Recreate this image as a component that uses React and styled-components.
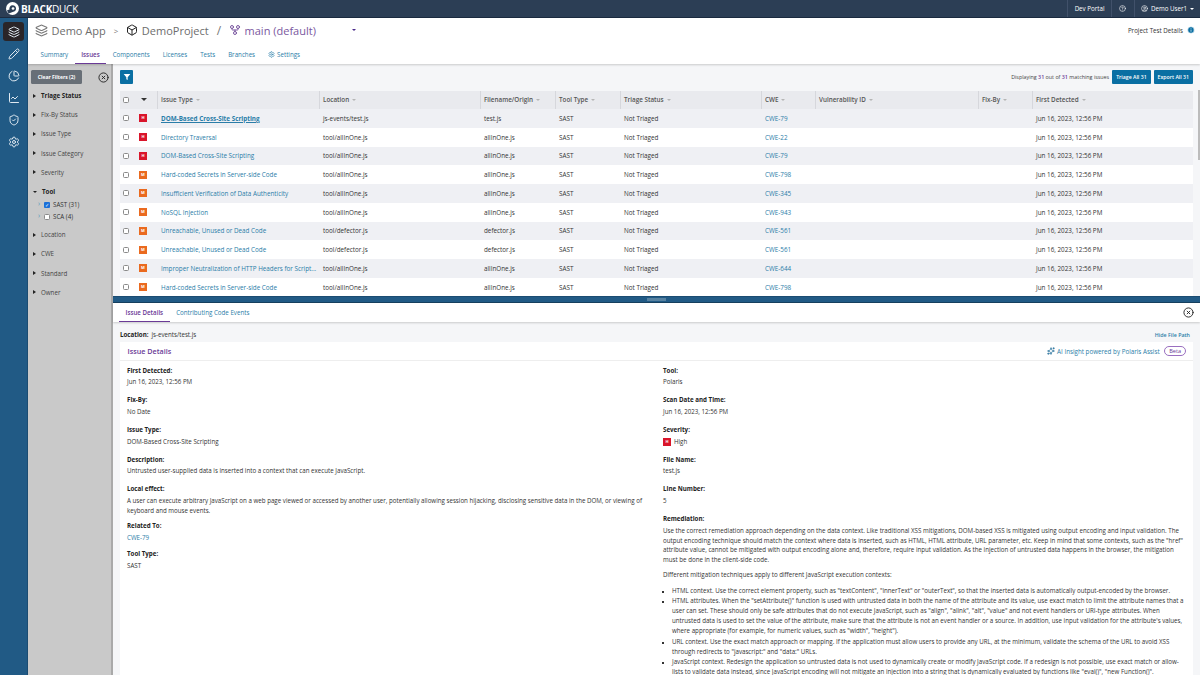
import React from 'react'
import styled, { createGlobalStyle } from 'styled-components'
import { Box, ChartLine, ChartPie, CircleHelp, CircleUser, CircleX, GitFork, Info, Layers, Pencil, Settings, ShieldCheck, Sparkles } from 'lucide-react'

const GlobalStyle = createGlobalStyle`
  html, body { margin: 0; padding: 0; height: 100%; overflow: hidden; }
  body { font-family: "Open Sans", "Liberation Sans", sans-serif; font-size: 6.2px; color: #333; background: #f5f6f8; }
  * { box-sizing: border-box; }
`

const Page = styled.div`
  width: 1200px;
  height: 675px;
  display: flex;
  flex-direction: column;
  overflow: hidden;
`
const TopBar = styled.header`
  height: 18px;
  flex: none;
  background: #2c3e55;
  border-bottom: 1px solid #1b2b40;
  display: flex;
  align-items: center;
  color: #fff;
`
const Logo = styled.div`
  display: flex;
  align-items: center;
  gap: 2px;
  padding-left: 6px;
  flex: 1;
`
const Brand = styled.div`
  font-size: 10px;
  letter-spacing: -0.25px;
  font-weight: 700;
  span { font-weight: 400; }
`
const TopItem = styled.div`
  height: 17px;
  display: flex;
  align-items: center;
  gap: 3px;
  padding: 0 ${p => p.$pad || 7}px;
  border-left: 1px solid #41516a;
  font-size: 6.2px;
`
const Caret = styled.i`
  width: 0;
  height: 0;
  display: inline-block;
  margin-left: ${p => p.$ml || 0}px;
  border-left: ${p => p.$s || 2.5}px solid transparent;
  border-right: ${p => p.$s || 2.5}px solid transparent;
  border-top: ${p => p.$s || 2.5}px solid ${p => p.$c || '#fff'};
`
const SideCaret = styled.i`
  width: 0;
  height: 0;
  display: inline-block;
  border-top: 2.5px solid transparent;
  border-bottom: 2.5px solid transparent;
  border-left: 3px solid #222;
`
const Body = styled.div`
  flex: 1;
  min-height: 0;
  display: flex;
`
const Rail = styled.nav`
  width: 28px;
  flex: none;
  background: #215a85;
  border-right: 1px solid #1b4c72;
  display: flex;
  flex-direction: column;
  align-items: center;
  padding-top: 4px;
  gap: 3px;
`
const RailBtn = styled.div`
  width: 21px;
  height: 19px;
  border-radius: 3px;
  display: flex;
  align-items: center;
  justify-content: center;
  color: #dfe9f1;
  background: ${p => (p.$active ? '#2a2528' : 'transparent')};
`
const Content = styled.div`
  flex: 1;
  min-width: 0;
  display: flex;
  flex-direction: column;
`
const Head = styled.div`
  height: 46px;
  flex: none;
  background: #fff;
  box-shadow: 0 1px 2px rgba(0,0,0,0.18);
  position: relative;
  z-index: 2;
  display: flex;
  flex-direction: column;
`
const Crumbs = styled.div`
  height: 26px;
  display: flex;
  align-items: center;
  padding: 0 5px 2px 7px;
  font-size: 11px;
  color: #6d6d6d;
`
const Crumb = styled.div`
  display: flex;
  align-items: center;
  gap: 3.5px;
  color: ${p => p.$c || '#6d6d6d'};
`
const Sep = styled.span`
  margin: ${p => p.$m || '0 8px'};
  font-size: ${p => p.$s || 12}px;
  color: #777;
  display: flex;
`
const ProjectDetails = styled.div`
  margin-left: auto;
  display: flex;
  align-items: center;
  gap: 4px;
  font-size: 6.2px;
  color: #333;
`
const Tabs = styled.div`
  display: flex;
  padding-left: ${p => p.$pad ?? 6}px;
  height: ${p => p.$h || 20}px;
  align-items: stretch;
`
const Tab = styled.div`
  display: flex;
  align-items: center;
  gap: 2px;
  padding: 1px 6.5px 0;
  font-size: 6.2px;
  color: ${p => (p.$active ? '#6a3a96' : '#2a7da8')};
  font-weight: ${p => (p.$active ? 600 : 400)};
  border-bottom: 1.5px solid ${p => (p.$active ? '#6a3a96' : 'transparent')};
`
const Work = styled.div`
  flex: 1;
  min-height: 0;
  display: flex;
`
const Filters = styled.aside`
  width: 85px;
  flex: none;
  background: #c9c9c9;
  border-right: 2px solid #a9a9a9;
  padding: 6px 0 0 3px;
`
const FilterTop = styled.div`
  display: flex;
  align-items: center;
  justify-content: space-between;
  padding-right: 2px;
  margin-bottom: 2px;
`
const ClearBtn = styled.div`
  width: 51px;
  height: 14px;
  background: #686f77;
  color: #fff;
  border-radius: 1.5px;
  font-size: 5px;
  font-weight: 700;
  display: flex;
  align-items: center;
  justify-content: center;
`
const FilterRow = styled.div`
  height: 19.2px;
  display: flex;
  align-items: center;
  gap: 5px;
  padding-left: 2px;
  font-size: 6.2px;
  font-weight: ${p => (p.$bold ? 700 : 400)};
  color: ${p => (p.$bold ? '#222' : '#444')};
`
const FilterSubs = styled.div`
  margin: -2.5px 0 2.5px;
`
const FilterSub = styled.div`
  height: 12px;
  display: flex;
  align-items: center;
  gap: 2px;
  padding-left: 7px;
  font-size: 6.2px;
  color: #333;
  em { color: #4a94b8; font-style: normal; font-size: 7px; width: 4px; margin-top: -3px; }
`
const Main = styled.main`
  flex: 1;
  min-width: 0;
  display: flex;
  flex-direction: column;
`
const Upper = styled.section`
  height: 232px;
  flex: none;
  overflow: hidden;
  padding: 0 7px 0 7px;
  position: relative;
`
const Toolbar = styled.div`
  height: 26.5px;
  display: flex;
  align-items: center;
  gap: 3px;
  font-size: 5.35px;
  color: #444;
  b { color: #6a3a96; font-weight: 600; }
`
const FilterBtn = styled.div`
  width: 13px;
  height: 14px;
  background: #0a6fa3;
  border-radius: 1px;
  display: flex;
  align-items: center;
  justify-content: center;
  margin-right: auto;
`
const PrimaryBtn = styled.div`
  height: 14px;
  background: #0a6fa3;
  color: #fff;
  font-weight: 600;
  font-size: 5.2px;
  padding: 0 4px;
  border-radius: 1px;
  display: flex;
  align-items: center;
`
const Grid = styled.div`
  display: grid;
  grid-template-columns: 19px 18px 162px 161px 75px 65px 141px 54px 163px 54px 161px;
  height: ${p => p.$h}px;
  align-items: center;
  background: ${p => p.$bg};
`
const Th = styled.div`
  height: 100%;
  display: flex;
  align-items: center;
  gap: 3px;
  padding-left: 3px;
  font-size: 6.3px;
  font-weight: 600;
  color: #555;
  border-left: 1.5px solid #d6d7dc;
`
const Td = styled.div`
  padding-left: 4px;
  font-size: 6.3px;
  color: ${p => (p.$link ? '#2a7da8' : '#333')};
  font-weight: ${p => (p.$strong ? 700 : 400)};
  text-decoration: ${p => (p.$strong ? 'underline' : 'none')};
  white-space: nowrap;
  overflow: hidden;
`
const Check = styled.div`
  width: 6px;
  height: 6px;
  margin-left: ${p => p.$ml ?? 3}px;
  margin-right: ${p => p.$mr ?? 0}px;
  border: 1px solid #8a8a8a;
  border-radius: 1.5px;
  background: #fff;
`
const CheckOn = styled.div`
  width: 6px;
  height: 6px;
  background: #1a6fd8;
  border-radius: 1px;
  margin-right: 1px;
  color: #fff;
  font-size: 5px;
  line-height: 6px;
  text-align: center;
`
const Sev = styled.div`
  width: 8px;
  height: 8px;
  background: ${p => (p.$level === 'H' ? '#d9152b' : '#ea6a1f')};
  color: #fff;
  font-size: 4px;
  font-weight: 700;
  line-height: 8px;
  text-align: center;
`
const ScrollThumb = styled.div`
  position: absolute;
  right: 0;
  top: 26px;
  width: 2.5px;
  height: 70px;
  background: #bcbcbc;
`
const Splitter = styled.div`
  height: 7px;
  flex: none;
  background: #215a85;
  border-top: 1px solid #1b4c72;
  border-bottom: 1px solid #17405f;
  display: flex;
  align-items: center;
  justify-content: center;
`
const Grip = styled.div`
  width: 19px;
  height: 3px;
  background: #6f93ad;
  opacity: 0.7;
`
const DetailTabs = styled.div`
  height: 19px;
  flex: none;
  background: #fff;
  box-shadow: 0 1px 2px rgba(0,0,0,0.18);
  display: flex;
  align-items: center;
  justify-content: space-between;
  padding: 0 6px;
  position: relative;
`
const Location = styled.div`
  height: 20px;
  flex: none;
  display: flex;
  align-items: center;
  justify-content: space-between;
  padding: 5px 10px 0 7px;
  font-size: 6.2px;
  b { font-weight: 700; color: #222; margin-right: 3px; }
`
const HideLink = styled.span`
  font-size: 5.3px;
  font-weight: 600;
  color: #2a7da8;
`
const Card = styled.div`
  flex: 1;
  margin: 0 7px;
  background: #fff;
  min-height: 0;
  overflow: hidden;
`
const CardHead = styled.div`
  height: 19px;
  display: flex;
  align-items: center;
  justify-content: space-between;
  padding: 0 7px 0 7.5px;
  border-bottom: 1px solid #eee;
`
const CardTitle = styled.div`
  font-size: 7.2px;
  font-weight: 600;
  color: #6a3a96;
`
const Insight = styled.div`
  display: flex;
  align-items: center;
  gap: 2.5px;
  font-size: 6.25px;
  color: #2a7da8;
`
const Beta = styled.span`
  margin-left: 2px;
  border: 1px solid #9a6fc0;
  border-radius: 6px;
  padding: 0 4px;
  line-height: 8px;
  font-size: 5.6px;
  color: #6a3a96;
`
const Columns = styled.div`
  display: grid;
  grid-template-columns: 536px 1fr;
  padding: 4.5px 7px 0 7px;
`
const Field = styled.div`
  margin-bottom: ${p => p.$mb ?? 8}px;
`
const Label = styled.div`
  font-weight: 700;
  font-size: 6.2px;
  color: #222;
  line-height: 9.7px;
  margin-bottom: 2px;
`
const Value = styled.div`
  font-size: 6.2px;
  color: #333;
  line-height: ${p => p.$lh || 10}px;
  margin-bottom: ${p => p.$mb || 0}px;
`
const ValueLink = styled(Value)`
  color: #2a7da8;
  margin: 2.5px 0 -2px;
`
const SevLine = styled.div`
  display: flex;
  align-items: center;
  gap: 3px;
  height: 10px;
  font-size: 6.2px;
`
const Bullets = styled.ul`
  margin: 0;
  padding-left: 9px;
  font-size: 6.2px;
  line-height: 10px;
  list-style: square;
  li { margin-bottom: 0.5px; }
  li::marker { font-size: 5px; }
`

const columns = ['Issue Type', 'Location', 'Filename/Origin', 'Tool Type', 'Triage Status', 'CWE', 'Vulnerability ID', 'Fix-By', 'First Detected']
const rows = [
  ['H', 'DOM-Based Cross-Site Scripting', 'js-events/test.js', 'test.js', 'CWE-79'],
  ['H', 'Directory Traversal', 'tool/allInOne.js', 'allInOne.js', 'CWE-22'],
  ['H', 'DOM-Based Cross-Site Scripting', 'tool/allInOne.js', 'allInOne.js', 'CWE-79'],
  ['M', 'Hard-coded Secrets in Server-side Code', 'tool/allInOne.js', 'allInOne.js', 'CWE-798'],
  ['M', 'Insufficient Verification of Data Authenticity', 'tool/allInOne.js', 'allInOne.js', 'CWE-345'],
  ['M', 'NoSQL Injection', 'tool/allInOne.js', 'allInOne.js', 'CWE-943'],
  ['M', 'Unreachable, Unused or Dead Code', 'tool/defector.js', 'defector.js', 'CWE-561'],
  ['M', 'Unreachable, Unused or Dead Code', 'tool/defector.js', 'defector.js', 'CWE-561'],
  ['M', 'Improper Neutralization of HTTP Headers for Script...', 'tool/allInOne.js', 'allInOne.js', 'CWE-644'],
  ['M', 'Hard-coded Secrets in Server-side Code', 'tool/allInOne.js', 'allInOne.js', 'CWE-798'],
]
const filterTop = [['Triage Status', true], ['Fix-By Status'], ['Issue Type'], ['Issue Category'], ['Severity']]
const filterBottom = ['Location', 'CWE', 'Standard', 'Owner']

const BlackDuckMark = () => (
  <svg width="13" height="13" viewBox="0 0 24 24">
    <circle cx="12" cy="12" r="12" fill="#fff" />
    <path d="M12 6a6.500 6.500 0 0 1 6.500 6.500c0 2-1 3.500-2.500 4.500L5 21a12 12 0 0 1-3-6l4.500-1A6 6 0 0 1 12 6z" fill="#2c3e55" />
    <circle cx="13" cy="12" r="2.500" fill="#fff" />
  </svg>
)

export default function App() {
  return (
    <Page>
      <GlobalStyle />
      <TopBar>
        <Logo><BlackDuckMark /><Brand>BLACK<span>DUCK</span></Brand></Logo>
        <TopItem $pad={6.5}>Dev Portal</TopItem>
        <TopItem $pad={7.5}><CircleHelp size={7} /></TopItem>
        <TopItem $pad={6}><CircleUser size={7} />Demo User1<Caret /></TopItem>
      </TopBar>
      <Body>
        <Rail>
          <RailBtn $active><Layers size={12} /></RailBtn>
          <RailBtn><Pencil size={12} /></RailBtn>
          <RailBtn><ChartPie size={12} /></RailBtn>
          <RailBtn><ChartLine size={12} /></RailBtn>
          <RailBtn><ShieldCheck size={12} /></RailBtn>
          <RailBtn><Settings size={12} /></RailBtn>
        </Rail>
        <Content>
          <Head>
            <Crumbs>
              <Crumb><Layers size={13} color="#777" />Demo App</Crumb>
              <Sep $s={8}>&gt;</Sep>
              <Crumb><Box size={12} color="#222" />DemoProject</Crumb>
              <Sep>/</Sep>
              <Crumb $c="#7a57a0"><GitFork size={12} />main (default)</Crumb>
              <Sep $m="0 0 0 36px"><Caret $c="#4a2a8a" /></Sep>
              <ProjectDetails>Project Test Details <Info size={8} fill="#0a6fa3" color="#fff" /></ProjectDetails>
            </Crumbs>
            <Tabs>
              {['Summary', 'Issues', 'Components', 'Licenses', 'Tests', 'Branches'].map(t => (
                <Tab key={t} $active={t === 'Issues'}>{t}</Tab>
              ))}
              <Tab><Settings size={7} />Settings</Tab>
            </Tabs>
          </Head>
          <Work>
            <Filters>
              <FilterTop>
                <ClearBtn>Clear Filters (2)</ClearBtn>
                <CircleX size={11} color="#222" />
              </FilterTop>
              {filterTop.map(([name, bold]) => (
                <FilterRow key={name} $bold={bold}><SideCaret />{name}</FilterRow>
              ))}
              <FilterRow $bold><Caret $c="#222" />Tool</FilterRow>
              <FilterSubs>
                <FilterSub><em>›</em><CheckOn>✓</CheckOn>SAST (31)</FilterSub>
                <FilterSub><em>›</em><Check $ml={0} $mr={1} />SCA (4)</FilterSub>
              </FilterSubs>
              {filterBottom.map(name => (
                <FilterRow key={name}><SideCaret />{name}</FilterRow>
              ))}
            </Filters>
            <Main>
              <Upper>
                <Toolbar>
                  <FilterBtn>
                    <svg width="8" height="8" viewBox="0 0 24 24"><path d="M2 3h20l-8 10v8l-4-2v-6z" fill="#fff" /></svg>
                  </FilterBtn>
                  <span>Displaying <b>31</b> out of <b>31</b> matching issues</span>
                  <PrimaryBtn>Triage All 31</PrimaryBtn>
                  <PrimaryBtn>Export All 31</PrimaryBtn>
                </Toolbar>
                <Grid $h={18.5} $bg="#e9eaee">
                  <Check />
                  <Caret $s={3} $c="#333" $ml={2} />
                  {columns.map(c => (
                    <Th key={c}>{c}<Caret $c="#b5b5b5" /></Th>
                  ))}
                </Grid>
                {rows.map((r, i) => (
                  <Grid key={i} $h={18.75} $bg={i % 2 ? '#fff' : '#eff0f4'}>
                    <Check />
                    <Sev $level={r[0]}>{r[0]}</Sev>
                    <Td $link $strong={i === 0}>{r[1]}</Td>
                    <Td>{r[2]}</Td>
                    <Td>{r[3]}</Td>
                    <Td>SAST</Td>
                    <Td>Not Triaged</Td>
                    <Td $link>{r[4]}</Td>
                    <Td />
                    <Td />
                    <Td>Jun 16, 2023, 12:56 PM</Td>
                  </Grid>
                ))}
                <ScrollThumb />
              </Upper>
              <Splitter><Grip /></Splitter>
              <DetailTabs>
                <Tabs $h={19} $pad={0}>
                  <Tab $active>Issue Details</Tab>
                  <Tab>Contributing Code Events</Tab>
                </Tabs>
                <CircleX size={11} color="#222" />
              </DetailTabs>
              <Location>
                <span><b>Location:</b>js-events/test.js</span>
                <HideLink>Hide File Path</HideLink>
              </Location>
              <Card>
                <CardHead>
                  <CardTitle>Issue Details</CardTitle>
                  <Insight><Sparkles size={8} color="#0a5f8f" />AI Insight powered by Polaris Assist<Beta>Beta</Beta></Insight>
                </CardHead>
                <Columns>
                  <div>
                    <Field><Label>First Detected:</Label><Value>Jun 16, 2023, 12:56 PM</Value></Field>
                    <Field><Label>Fix-By:</Label><Value>No Date</Value></Field>
                    <Field><Label>Issue Type:</Label><Value>DOM-Based Cross-Site Scripting</Value></Field>
                    <Field><Label>Description:</Label><Value>Untrusted user-supplied data is inserted into a context that can execute JavaScript.</Value></Field>
                    <Field $mb={5}><Label>Local effect:</Label><Value>A user can execute arbitrary JavaScript on a web page viewed or accessed by another user, potentially allowing session hijacking, disclosing sensitive data in the DOM, or viewing of keyboard and mouse events.</Value></Field>
                    <Field><Label>Related To:</Label><ValueLink>CWE-79</ValueLink></Field>
                    <Field><Label>Tool Type:</Label><Value>SAST</Value></Field>
                  </div>
                  <div>
                    <Field><Label>Tool:</Label><Value>Polaris</Value></Field>
                    <Field><Label>Scan Date and Time:</Label><Value>Jun 16, 2023, 12:56 PM</Value></Field>
                    <Field><Label>Severity:</Label><SevLine><Sev $level="H">H</Sev>High</SevLine></Field>
                    <Field><Label>File Name:</Label><Value>test.js</Value></Field>
                    <Field><Label>Line Number:</Label><Value>5</Value></Field>
                    <Field>
                      <Label>Remediation:</Label>
                      <Value $lh={9.8} $mb={5.2}>Use the correct remediation approach depending on the data context. Like traditional XSS mitigations, DOM-based XSS is mitigated using output encoding and input validation. The output encoding technique should match the context where data is inserted, such as HTML, HTML attribute, URL parameter, etc. Keep in mind that some contexts, such as the "href" attribute value, cannot be mitigated with output encoding alone and, therefore, require input validation. As the injection of untrusted data happens in the browser, the mitigation must be done in the client-side code.</Value>
                      <Value $lh={9.8} $mb={5.7}>Different mitigation techniques apply to different JavaScript execution contexts:</Value>
                      <Bullets>
                        <li>HTML context. Use the correct element property, such as "textContent", "innerText" or "outerText", so that the inserted data is automatically output-encoded by the browser.</li>
                        <li>HTML attributes. When the "setAttribute()" function is used with untrusted data in both the name of the attribute and its value, use exact match to limit the attribute names that a user can set. These should only be safe attributes that do not execute JavaScript, such as "align", "alink", "alt", "value" and not event handlers or URI-type attributes. When untrusted data is used to set the value of the attribute, make sure that the attribute is not an event handler or a source. In addition, use input validation for the attribute's values, where appropriate (for example, for numeric values, such as "width", "height").</li>
                        <li>URL context. Use the exact match approach or mapping. If the application must allow users to provide any URL, at the minimum, validate the schema of the URL to avoid XSS through redirects to "javascript:" and "data:" URLs.</li>
                        <li>JavaScript context. Redesign the application so untrusted data is not used to dynamically create or modify JavaScript code. If a redesign is not possible, use exact match or allow-lists to validate data instead, since JavaScript encoding will not mitigate an injection into a string that is dynamically evaluated by functions like "eval()", "new Function()".</li>
                      </Bullets>
                    </Field>
                  </div>
                </Columns>
              </Card>
            </Main>
          </Work>
        </Content>
      </Body>
    </Page>
  )
}
